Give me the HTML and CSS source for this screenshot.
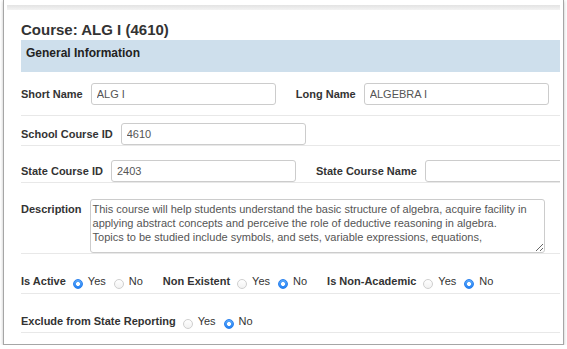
FILE: index.html
```html
<!DOCTYPE html>
<html lang="en">
<head>
<meta charset="utf-8">
<title>Course: ALG I (4610)</title>
<link rel="stylesheet" href="styles.css">
</head>
<body>
<div class="window">
  <div class="inner">
    <div class="topbar"></div>
    <div class="content">
      <h1 class="title">Course: ALG I (4610)</h1>
      <div class="section-head">General Information</div>

      <div class="row row-1">
        <div class="field">
          <label class="label" for="short">Short Name</label>
          <input class="text-input" id="short" type="text" value="ALG I">
        </div>
        <div class="field">
          <label class="label" for="long">Long Name</label>
          <input class="text-input" id="long" type="text" value="ALGEBRA I">
        </div>
      </div>

      <div class="row row-2">
        <div class="field">
          <label class="label" for="scid">School Course ID</label>
          <input class="text-input" id="scid" type="text" value="4610">
        </div>
      </div>

      <div class="row row-3">
        <div class="field">
          <label class="label" for="stid">State Course ID</label>
          <input class="text-input" id="stid" type="text" value="2403">
        </div>
        <div class="field">
          <label class="label" for="stname">State Course Name</label>
          <input class="text-input" id="stname" type="text" value="">
        </div>
      </div>

      <div class="row row-4">
        <div class="field field-top">
          <label class="label label-top" for="desc">Description</label>
          <textarea class="text-area" id="desc">This course will help students understand the basic structure of algebra, acquire facility in applying abstract concepts and perceive the role of deductive reasoning in algebra. Topics to be studied include symbols, and sets, variable expressions, equations,</textarea>
        </div>
      </div>

      <div class="row row-5">
        <div class="field field-radio">
          <span class="label">Is Active</span>
          <div class="options">
            <label class="opt"><input class="radio" type="radio" name="active" checked>Yes</label>
            <label class="opt"><input class="radio" type="radio" name="active">No</label>
          </div>
        </div>
        <div class="field field-radio">
          <span class="label">Non Existent</span>
          <div class="options">
            <label class="opt"><input class="radio" type="radio" name="nonexist">Yes</label>
            <label class="opt"><input class="radio" type="radio" name="nonexist" checked>No</label>
          </div>
        </div>
        <div class="field field-radio">
          <span class="label">Is Non-Academic</span>
          <div class="options">
            <label class="opt"><input class="radio" type="radio" name="nonacad">Yes</label>
            <label class="opt"><input class="radio" type="radio" name="nonacad" checked>No</label>
          </div>
        </div>
      </div>

      <div class="row row-6">
        <div class="field field-radio">
          <span class="label">Exclude from State Reporting</span>
          <div class="options">
            <label class="opt"><input class="radio" type="radio" name="exclude">Yes</label>
            <label class="opt"><input class="radio" type="radio" name="exclude" checked>No</label>
          </div>
        </div>
      </div>
    </div>
  </div>
</div>
</body>
</html>
```

FILE: styles.css
```css
html, body {
  margin: 0;
  padding: 0;
  background: #ffffff;
}

body {
  font-family: "Liberation Sans", Arial, Helvetica, sans-serif;
  color: #333333;
}

.window {
  margin-left: 3px;
  width: 559px;
  height: 344px;
  border: 1px solid #a6a6a6;
  border-top: none;
  box-shadow: 0 1px 3px rgba(0, 0, 0, 0.25);
  background: #ffffff;
  overflow: hidden;
}

.inner {
  padding: 5px 3px 0 3px;
}

.topbar {
  height: 5px;
  background: linear-gradient(to bottom, #e3e3e3, #f3f3f3);
}

.content {
  margin-left: 14px;
  overflow: hidden;
}

.title {
  margin: 11px 0 0;
  font-size: 15px;
  line-height: 18px;
  padding-bottom: 1px;
  font-weight: bold;
  color: #333333;
}

.section-head {
  height: 32px;
  box-sizing: border-box;
  padding: 6px 5px 4px;
  background: #cedfec;
  font-size: 12px;
  line-height: 14px;
  font-weight: bold;
  color: #222222;
}

.row {
  display: flex;
  align-items: center;
  gap: 20px;
  border-bottom: 1px solid #e8e8e8;
}

.row-1 { padding: 11px 0 10px; }
.row-2 { padding: 7px 0 0; }
.row-3 { padding: 14px 0 0; }
.row-4 { padding: 16px 0 0; }
.row-5 { padding: 19px 0 4px; gap: 20px; }
.row-6 { padding: 19px 0 3px; }

.field {
  display: flex;
  align-items: center;
  gap: 8px;
  flex-shrink: 0;
}

.field-radio {
  gap: 7px;
}

.field-top {
  align-items: flex-start;
}

.label {
  font-size: 11px;
  line-height: 13px;
  font-weight: bold;
  color: #333333;
  white-space: nowrap;
}

.label-top {
  padding-top: 4px;
}

.text-input {
  width: 185px;
  height: 22px;
  box-sizing: border-box;
  margin: 0;
  padding: 0 5px;
  border: 1px solid #cccccc;
  border-radius: 3px;
  font-family: "Liberation Sans", Arial, sans-serif;
  font-size: 11px;
  color: #555555;
  background: #ffffff;
  flex-shrink: 0;
}

.text-area {
  display: block;
  width: 455px;
  height: 54px;
  box-sizing: border-box;
  margin: 0;
  padding: 2px 14px 2px 2px;
  border: 1px solid #cccccc;
  border-radius: 3px;
  font-family: "Liberation Sans", Arial, sans-serif;
  font-size: 11px;
  line-height: 14px;
  color: #555555;
  overflow: hidden;
  resize: both;
}

.options {
  display: flex;
  align-items: center;
  gap: 8px;
}

.opt {
  display: flex;
  align-items: center;
  gap: 5px;
  font-size: 11px;
  line-height: 13px;
  color: #333333;
}

.radio {
  -webkit-appearance: none;
  appearance: none;
  width: 10px;
  height: 10px;
  margin: 6px 0 0;
  box-sizing: border-box;
  border: 1px solid #cfcfcf;
  border-radius: 50%;
  background: linear-gradient(to bottom, #ffffff, #f2f2f2);
  flex-shrink: 0;
}

.radio:checked {
  border-color: #2b82ee;
  background:
    radial-gradient(circle, #ffffff 0, #ffffff 1.6px, rgba(255, 255, 255, 0) 2.3px),
    linear-gradient(to bottom, #5eaafb, #2381f3);
}
```
